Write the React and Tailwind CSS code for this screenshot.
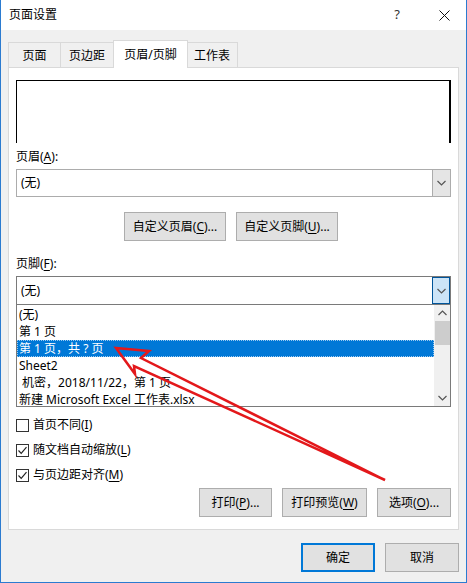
import React from "react";

const FONT = "font-['Noto_Sans','Noto_Sans_CJK_SC',sans-serif]";

function Tab({ label, active, w }) {
  if (active) {
    return (
      <div
        className={`${w} h-[28px] -mb-px -mx-px z-10 bg-white border border-b-0 border-[#d9d9d9] flex items-center justify-center`}
      >
        {label}
      </div>
    );
  }
  return (
    <div
      className={`${w} h-[25px] bg-[#f0f0f0] border border-b-0 border-[#d9d9d9] -ml-px first:ml-0 flex items-center justify-center pt-[1px]`}
    >
      {label}
    </div>
  );
}

function Chevron({ up, className }) {
  return (
    <svg width="9" height="6" viewBox="0 0 9 6" className={className}>
      <path
        d={up ? "M0.5 5 L4.5 1 L8.5 5" : "M0.5 1 L4.5 5 L8.5 1"}
        fill="none"
        stroke="#555"
        strokeWidth="1.2"
      />
    </svg>
  );
}

function Combo({ active }) {
  return (
    <div
      className={`h-[28px] flex border ${
        active ? "border-[#7a7a7a] border-b-0" : "border-[#acacac]"
      } bg-white`}
    >
      <div className="flex-1 flex items-center pl-[4px]">(无)</div>
      <div
        className={`w-[18px] flex items-center justify-center border-l ${
          active
            ? "bg-[#cce4f7] border-[#005499] border"
            : "bg-[#e5e5e5] border-[#acacac]"
        }`}
      >
        <Chevron />
      </div>
    </div>
  );
}

function Button({ children, w, primary }) {
  return (
    <div
      className={`${w} h-[29px] flex items-center justify-center bg-[#e1e1e1] ${
        primary ? "border-2 border-[#0078d7]" : "border border-[#adadad]"
      }`}
    >
      {children}
    </div>
  );
}

function Checkbox({ checked, children }) {
  return (
    <div className="flex items-center h-[16px] gap-[4px]">
      <div className="w-[13px] h-[13px] border border-[#333] bg-white flex items-center justify-center">
        {checked && (
          <svg width="11" height="11" viewBox="0 0 11 11">
            <path d="M1.5 5.5 L4.2 8.3 L9.5 2.2" fill="none" stroke="#222" strokeWidth="1.2" />
          </svg>
        )}
      </div>
      <span>{children}</span>
    </div>
  );
}

const u = (c) => <span className="underline underline-offset-2">{c}</span>;

export default function App() {
  const items = [
    "(无)",
    "第 1 页",
    "第 1 页，共 ? 页",
    "Sheet2",
    "\u00a0机密，2018/11/22，第 1 页",
    "新建 Microsoft Excel 工作表.xlsx",
  ];

  return (
    <div
      className={`${FONT} relative w-[467px] h-[583px] bg-[#f0f0f0] border-x border-b border-[#2b7bd0] text-[12px] text-black flex flex-col overflow-hidden`}
    >
      {/* Title bar */}
      <div className="h-[30px] bg-white flex items-center pl-[8px] shrink-0">
        <span className="text-[12px]">页面设置</span>
        <span className="ml-auto mr-[39px] text-[13px] text-[#333]">?</span>
        <svg width="11" height="11" viewBox="0 0 11 11" className="mr-[16px]">
          <path d="M0.5 0.5 L10.5 10.5 M10.5 0.5 L0.5 10.5" stroke="#111" strokeWidth="1" />
        </svg>
      </div>

      {/* Body */}
      <div className="pl-[7px] pr-[7px] pt-[10px] flex flex-col">
        {/* Tabs */}
        <div className="flex items-end h-[27px]">
          <Tab label="页面" w="w-[53px]" />
          <Tab label="页边距" w="w-[54px]" />
          <Tab label="页眉/页脚" w="w-[75px]" active />
          <Tab label="工作表" w="w-[52px]" />
        </div>

        {/* Panel */}
        <div className="h-[463px] bg-white border border-[#d9d9d9] px-[7px] pt-[12px] flex flex-col">
          {/* Preview */}
          <div className="h-[63px] border-t border-l border-black border-r-[2px] shrink-0" />

          <div className="mt-[6px] h-[16px] flex items-center">页眉({u("A")}):</div>
          <div className="mt-[4px]">
            <Combo />
          </div>

          <div className="mt-[15px] flex gap-[10px] pl-[108px]">
            <Button w="w-[102px]">自定义页眉({u("C")})...</Button>
            <Button w="w-[102px]">自定义页脚({u("U")})...</Button>
          </div>

          <div className="mt-[15px] h-[16px] flex items-center">页脚({u("F")}):</div>
          <div className="mt-[4px]">
            <Combo active />
          </div>

          {/* Dropdown list */}
          <div className="h-[103px] border border-[#7a7a7a] bg-white flex">
            <div className="flex-1 flex flex-col pt-[1px]">
              {items.map((t, i) => (
                <div
                  key={i}
                  className={`h-[17px] flex items-center pl-[2px] whitespace-nowrap ${
                    i === 2
                      ? "bg-[#0078d7] text-white outline-1 outline-dotted outline-[#9ccaf0] -outline-offset-1"
                      : ""
                  }`}
                >
                  {t}
                </div>
              ))}
            </div>
            <div className="w-[16px] bg-[#f0f0f0] flex flex-col items-center">
              <div className="h-[16px] flex items-center justify-center">
                <Chevron up />
              </div>
              <div className="w-[15px] h-[24px] bg-[#cdcdcd]" />
              <div className="flex-1" />
              <div className="h-[16px] flex items-center justify-center">
                <Chevron />
              </div>
            </div>
          </div>

          <div className="mt-[10px] flex flex-col gap-[9px]">
            <Checkbox>首页不同({u("I")})</Checkbox>
            <Checkbox checked>随文档自动缩放({u("L")})</Checkbox>
            <Checkbox checked>与页边距对齐({u("M")})</Checkbox>
          </div>

          <div className="mt-[5px] flex justify-end gap-[10px]">
            <Button w="w-[73px]">打印({u("P")})...</Button>
            <Button w="w-[85px]">打印预览({u("W")})</Button>
            <Button w="w-[74px]">选项({u("O")})...</Button>
          </div>
        </div>

        {/* Bottom buttons */}
        <div className="mt-[13px] flex justify-end gap-[10px]">
          <Button w="w-[74px]" primary>
            确定
          </Button>
          <Button w="w-[74px]">取消</Button>
        </div>
      </div>

      {/* Red annotation arrow */}
      <svg
        className="absolute left-0 top-0 pointer-events-none"
        width="467"
        height="583"
        viewBox="0 0 467 583"
      >
        <path
          d="M115 348 L148 351 L140 358 L384 480 L133 366 L134 374 Z"
          fill="none"
          stroke="#e3181b"
          strokeWidth="2.5"
          strokeLinejoin="miter"
        />
      </svg>
    </div>
  );
}
